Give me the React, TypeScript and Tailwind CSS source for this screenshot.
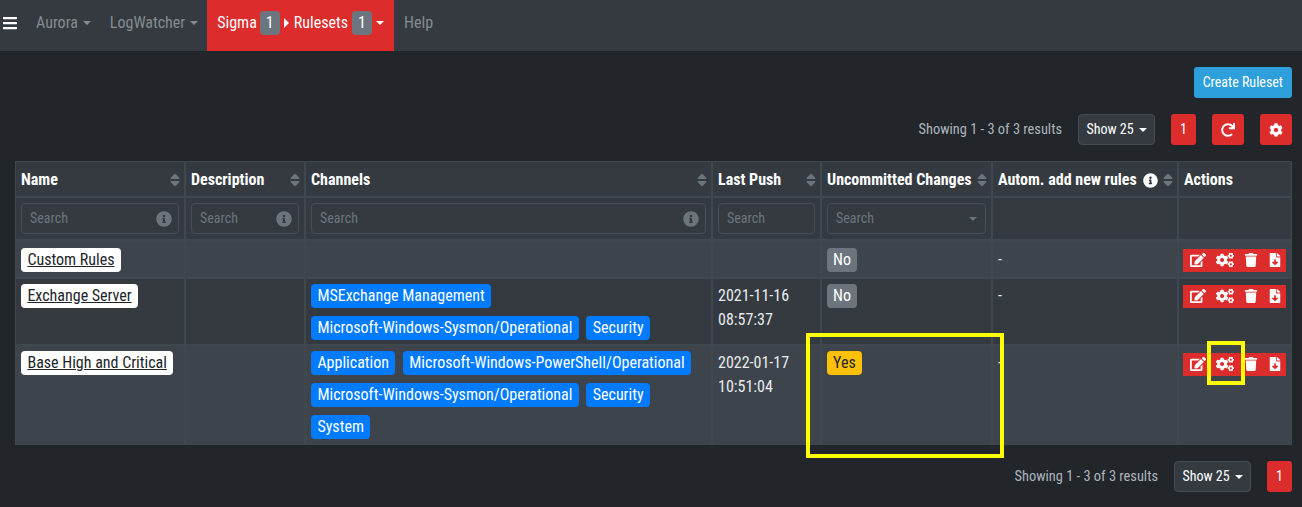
import { FaBars, FaCog, FaCogs, FaEdit, FaFileDownload, FaInfoCircle, FaRedo, FaSort, FaTrash } from "react-icons/fa";

const font = { fontFamily: "Roboto, sans-serif" };
const line = "border border-[#3f474f]";

function Caret() {
  return <span className="ml-[5px] inline-block h-0 w-0 border-x-[4px] border-t-[4px] border-x-transparent border-t-current align-[2px]" />;
}

function Chan({ t }: { t: string }) {
  return <span className="inline-block rounded-[4px] bg-[#007bff] px-[6.4px] text-[16px] leading-6 text-white">{t}</span>;
}

function ChanLine({ items }: { items: string[] }) {
  return (
    <div className="flex gap-x-[7.5px]">
      {items.map((t) => (
        <Chan key={t} t={t} />
      ))}
    </div>
  );
}

function Actions() {
  return (
    <div className="-ml-[1px] flex h-[23px] w-[103px] items-center justify-between bg-[#dc2c2c] pb-[2px] pl-[7px] pr-[4px] text-white">
      <FaEdit className="text-[16px]" />
      <FaCogs className="text-[18px]" />
      <FaTrash className="text-[14px]" />
      <FaFileDownload className="text-[14px]" />
    </div>
  );
}

function Head({ t, info, sort = true }: { t: string; info?: boolean; sort?: boolean }) {
  return (
    <th className={`${line} px-[5px] pt-[2px] text-left align-middle`}>
      <div className="flex items-center justify-between whitespace-nowrap text-[16px] font-bold text-white">
        <span className="flex items-center gap-[6px]">{t}{info && <FaInfoCircle className="text-[15px]" />}</span>
        {sort && <FaSort className="-mr-[4px] shrink-0 text-[16px] text-[#6c757d]" />}
      </div>
    </th>
  );
}

function Search({ info = true }: { info?: boolean }) {
  return (
    <td className={`${line} px-[5px] align-middle`}>
      <div className="flex h-[31px] items-center justify-between rounded-[4px] border border-[#454d55] pl-2 pr-[6px] text-[14px] text-[#6c757d]">
        Search
        {info && <FaInfoCircle className="text-[16px]" />}
      </div>
    </td>
  );
}

function Name({ t }: { t: string }) {
  return <span className="inline-block rounded-[4px] bg-white px-[6.4px] text-[16px] leading-6 text-[#212529] underline">{t}</span>;
}

function Badge({ t, c }: { t: string; c: string }) {
  return <span className={`inline-block rounded-[4px] px-[6px] text-[16px] leading-6 ${c}`}>{t}</span>;
}

const base = `${line} px-[5px] align-top text-[16px] text-[#e9ecef]`;

function NavItem({ className, children }: { className: string; children: React.ReactNode }) {
  return <div className={`flex items-center pb-[6px] ${className}`}>{children}</div>;
}

export default function App() {
  return (
    <div style={font} className="font-stretch-condensed relative h-[507px] w-[1302px] overflow-hidden bg-[#22262b]">
      <nav className="flex h-[51px] items-stretch bg-[#343a40] pl-[2px] text-[16px] text-[#858b91]">
        <NavItem className="mr-[18px]"><FaBars className="text-[16px] text-white" /></NavItem>
        <NavItem className="mr-[19px]">Aurora<Caret /></NavItem>
        <NavItem className="mr-[9px]">LogWatcher<Caret /></NavItem>
        <NavItem className="bg-[#dc2c2c] px-[10px] text-white">
          Sigma
          <span className="ml-[3px] w-[20px] rounded-[4px] bg-[#6c757d] text-center leading-[24px]">1</span>
          <span className="ml-[4px] mr-[5px] h-0 w-0 border-y-[5px] border-l-[5px] border-y-transparent border-l-white" />
          Rulesets
          <span className="ml-[4px] w-[20px] rounded-[4px] bg-[#6c757d] text-center leading-[24px]">1</span>
          <span className="ml-[4px] h-0 w-0 border-x-[4px] border-t-[4px] border-x-transparent border-t-white" />
        </NavItem>
        <NavItem className="ml-[10px]">Help</NavItem>
      </nav>

      <div className="flex justify-end pt-[16px] pr-[10px]">
        <button className="h-[31px] rounded-[3px] bg-[#2d9fda] px-[9px] text-[14px] text-white">Create Ruleset</button>
      </div>

      <div className="mt-[16px] flex h-[31px] items-center justify-end pr-[10px] text-[14px] text-[#adb5bd]">
        <span className="mr-[16px] text-[14.4px]">Showing 1 - 3 of 3 results</span>
        <button className="mr-[16px] flex h-[31px] w-[77px] items-center justify-center rounded-[4px] border border-[#454d55] bg-[#343a40] text-white">Show 25<Caret /></button>
        <button className="mr-[16px] h-[31px] w-[25px] rounded-[3px] bg-[#dc2c2c] text-white">1</button>
        <button className="mr-[16px] flex h-[31px] w-[32px] items-center justify-center rounded-[3px] bg-[#dc2c2c] text-white"><FaRedo className="text-[14px]" /></button>
        <button className="flex h-[31px] w-[32px] items-center justify-center rounded-[3px] bg-[#dc2c2c] text-white"><FaCog className="text-[14px]" /></button>
      </div>

      <div className="mt-[16px] pl-[15px]">
        <table className="w-[1277px] table-fixed border-separate border-spacing-0 bg-[#343a40]">
          <colgroup>
            <col className="w-[170px]" />
            <col className="w-[120px]" />
            <col className="w-[407px]" />
            <col className="w-[109px]" />
            <col className="w-[171px]" />
            <col className="w-[186px]" />
            <col className="w-[114px]" />
          </colgroup>
          <thead>
            <tr className="h-[36px]">
              <Head t="Name" />
              <Head t="Description" />
              <Head t="Channels" />
              <Head t="Last Push" />
              <Head t="Uncommitted Changes" />
              <Head t="Autom. add new rules" info />
              <Head t="Actions" sort={false} />
            </tr>
            <tr className="h-[43px]">
              <Search />
              <Search />
              <Search />
              <Search info={false} />
              <td className={`${line} px-[5px] align-middle`}>
                <div className="flex h-[31px] items-center justify-between rounded-[4px] border border-[#454d55] px-2 text-[14px] text-[#6c757d]">
                  Search
                  <span className="h-0 w-0 border-x-[4px] border-t-[4px] border-x-transparent border-t-[#6c757d]" />
                </div>
              </td>
              <td className={line} />
              <td className={line} />
            </tr>
          </thead>
          <tbody>
            <tr className="h-[38px] bg-[#3e444c]">
              <td className={`${base} border-t-2 pt-[6px]`}><Name t="Custom Rules" /></td>
              <td className={`${base} border-t-2`} />
              <td className={`${base} border-t-2`} />
              <td className={`${base} border-t-2`} />
              <td className={`${base} border-t-2 pt-[6px]`}><Badge t="No" c="bg-[#6c757d] text-white" /></td>
              <td className={`${base} border-t-2 pt-[6px]`}>-</td>
              <td className={`${base} border-t-2 pt-[7px]`}><Actions /></td>
            </tr>
            <tr className="h-[67px]">
              <td className={`${base} pt-[5px]`}><Name t="Exchange Server" /></td>
              <td className={base} />
              <td className={`${base} pt-[5px]`}>
                <div className="flex flex-col gap-y-2">
                  <ChanLine items={["MSExchange Management"]} />
                  <ChanLine items={["Microsoft-Windows-Sysmon/Operational", "Security"]} />
                </div>
              </td>
              <td className={`${base} pt-[5px] leading-6`}>2021-11-16<br />08:57:37</td>
              <td className={`${base} pt-[5px]`}><Badge t="No" c="bg-[#6c757d] text-white" /></td>
              <td className={`${base} pt-[5px]`}>-</td>
              <td className={`${base} pt-[6px]`}><Actions /></td>
            </tr>
            <tr className="h-[100px] bg-[#3e444c]">
              <td className={`${base} pt-[5px]`}><Name t="Base High and Critical" /></td>
              <td className={base} />
              <td className={`${base} pt-[5px]`}>
                <div className="flex flex-col gap-y-2">
                  <ChanLine items={["Application", "Microsoft-Windows-PowerShell/Operational"]} />
                  <ChanLine items={["Microsoft-Windows-Sysmon/Operational", "Security"]} />
                  <ChanLine items={["System"]} />
                </div>
              </td>
              <td className={`${base} pt-[5px] leading-6`}>2022-01-17<br />10:51:04</td>
              <td className={`${base} pt-[5px]`}><Badge t="Yes" c="bg-[#ffc107] text-[#212529]" /></td>
              <td className={`${base} pt-[5px]`}>-</td>
              <td className={`${base} pt-[7px]`}><Actions /></td>
            </tr>
          </tbody>
        </table>
      </div>

      <div className="mt-[16px] flex h-[31px] items-center justify-end pr-[10px] text-[14px] text-[#adb5bd]">
        <span className="mr-[16px] text-[14.4px]">Showing 1 - 3 of 3 results</span>
        <button className="mr-[16px] flex h-[31px] w-[77px] items-center justify-center rounded-[4px] border border-[#454d55] bg-[#343a40] text-white">Show 25<Caret /></button>
        <button className="h-[31px] w-[25px] rounded-[3px] bg-[#dc2c2c] text-white">1</button>
      </div>

      <div className="absolute left-[806px] top-[333px] h-[125px] w-[198px] border-4 border-[#ffff00]" />
      <div className="absolute left-[1207px] top-[341px] h-[44px] w-[38px] border-4 border-[#ffff00]" />
    </div>
  );
}
